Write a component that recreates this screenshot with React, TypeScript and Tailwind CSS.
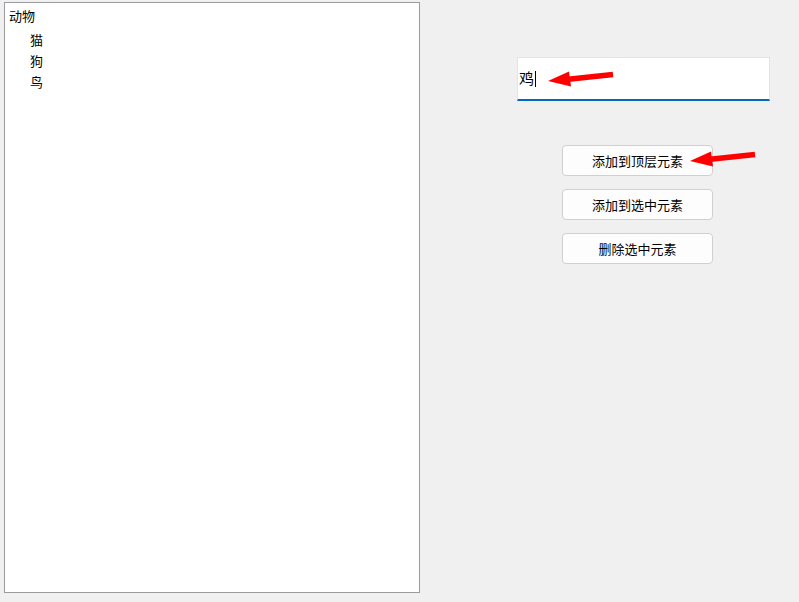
import React from "react";

const font = { fontFamily: '"Noto Sans CJK SC", "Noto Sans", sans-serif' };

const children = ["猫", "狗", "鸟"];
const buttons = ["添加到顶层元素", "添加到选中元素", "删除选中元素"];

// 红色标注箭头
function Arrow({ className }: { className: string }) {
  return (
    <svg className={className} viewBox="0 0 66 16" width="66" height="16">
      <path d="M65 3.5 L18 8.5" stroke="#ff0000" strokeWidth="5.5" strokeLinecap="butt" />
      <path d="M0 10 L21 0.5 L23 15.5 Z" fill="#ff0000" />
    </svg>
  );
}

export default function App() {
  return (
    <div
      className="w-[799px] h-[602px] bg-[#f0f0f0] flex text-[13px] text-black overflow-hidden"
      style={font}
    >
      {/* 树 */}
      <div className="ml-[4px] mt-[2px] w-[416px] h-[591px] border border-[#9a9a9f] bg-white pt-[3px] shrink-0">
        <div className="pl-[4px] h-[20px] leading-[20px]">动物</div>
        <div className="mt-[3px] flex flex-col">
          {children.map((c) => (
            <div key={c} className="pl-[25px] h-[21px] leading-[21px]">
              {c}
            </div>
          ))}
        </div>
      </div>

      {/* 右侧 */}
      <div className="flex-1 flex flex-col pl-[97px] pt-[57px]">
        <div className="relative w-[253px] h-[44px] bg-white border border-[#e3e3e3] border-b-2 border-b-[#0067c0] flex items-center pl-[1px]">
          <span className="text-[15px]">鸡</span>
          <span className="w-px h-[16px] bg-black ml-[1px]" />
          <Arrow className="absolute left-[30px] top-[13px]" />
        </div>

        <div className="mt-[44px] ml-[45px] flex flex-col gap-[13px]">
          {buttons.map((b, i) => (
            <div key={b} className="relative">
              <button className="w-[151px] h-[31px] bg-[#fdfdfd] border border-[#d0d0d0] rounded-[4px] text-[13px] flex items-center justify-center">
                {b}
              </button>
              {i === 0 && <Arrow className="absolute left-[128px] top-[6px]" />}
            </div>
          ))}
        </div>
      </div>
    </div>
  );
}
